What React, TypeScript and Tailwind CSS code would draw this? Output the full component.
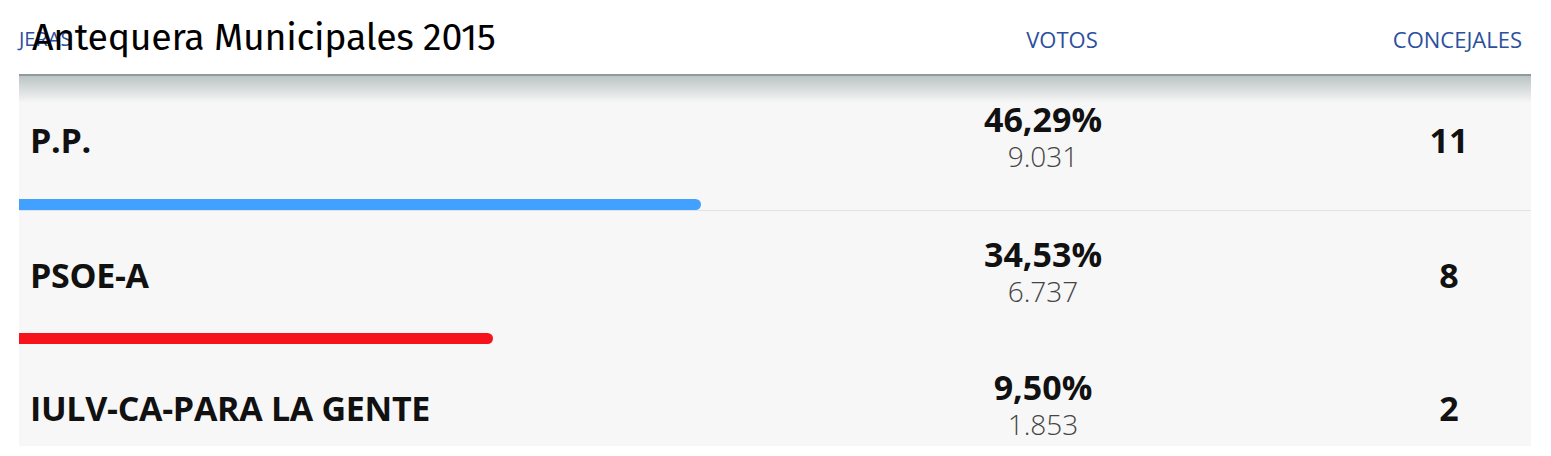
const rows = [
  { name: "P.P.", pct: "46,29%", votes: "9.031", seats: "11", bar: "w-[682px] bg-[#42a0ff]" },
  { name: "PSOE-A", pct: "34,53%", votes: "6.737", seats: "8", bar: "w-[474px] bg-[#f7131b]" },
  { name: "IULV-CA-PARA LA GENTE", pct: "9,50%", votes: "1.853", seats: "2", bar: "" },
];

const App = () => {
  return (
    <div className="w-[1551px] h-[456px] bg-white font-['Open_Sans',sans-serif] overflow-hidden">
      <div className="ml-[19px] w-[1512px]">
        {/* header */}
        <div className="relative h-[76px] flex items-center pt-[4px] border-b-2 border-b-[#8f9b9b] text-[22px] text-[#2c4f9e]">
          <div className="w-[940px] text-[20px]">JERAS</div>
          <div className="w-[206px] text-center">VOTOS</div>
          <div className="flex-1 text-right pr-[9px]">CONCEJALES</div>
          <h1 className="absolute left-[13px] top-[15px] text-[37.5px] leading-[46px] text-black font-['Fira_Sans','Roboto',sans-serif] tracking-[-0.3px]">
            Antequera Municipales 2015
          </h1>
        </div>
        {rows.map((r, i) => (
          <div
            key={r.name}
            className={`flex flex-col overflow-hidden ${i === 0 ? "h-[135px] bg-gradient-to-b from-[#bcc4c4] via-[#f7f7f7] via-[20%] to-[#f7f7f7]" : i === 1 ? "h-[133px] bg-[#f7f7f7]" : "h-[102px] bg-[#f7f7f7]"}`}
          >
            <div className="flex items-center shrink-0 h-[122px] pt-[6px]">
              <div className="w-[921px] pl-[11px] text-[34px] font-bold text-[#111] tracking-[-0.3px]">{r.name}</div>
              <div className="w-[206px] text-center leading-none mb-[8px]">
                <div className="text-[34px] font-bold text-[#111]">{r.pct}</div>
                <div className="text-[28px] font-light text-[#444] mt-[6px]">{r.votes}</div>
              </div>
              <div className="flex-1 pl-[266px] text-[34px] font-bold text-[#111]">
                <span className="inline-block w-[74px] text-center">{r.seats}</span>
              </div>
            </div>
            {r.bar && (
              <div className="flex items-end h-[13px] border-b border-b-[#dfe3ea]">
                <div className={`h-[11px] rounded-r-full ${r.bar}`} />
              </div>
            )}
          </div>
        ))}
      </div>
    </div>
  );
};

export default App;
